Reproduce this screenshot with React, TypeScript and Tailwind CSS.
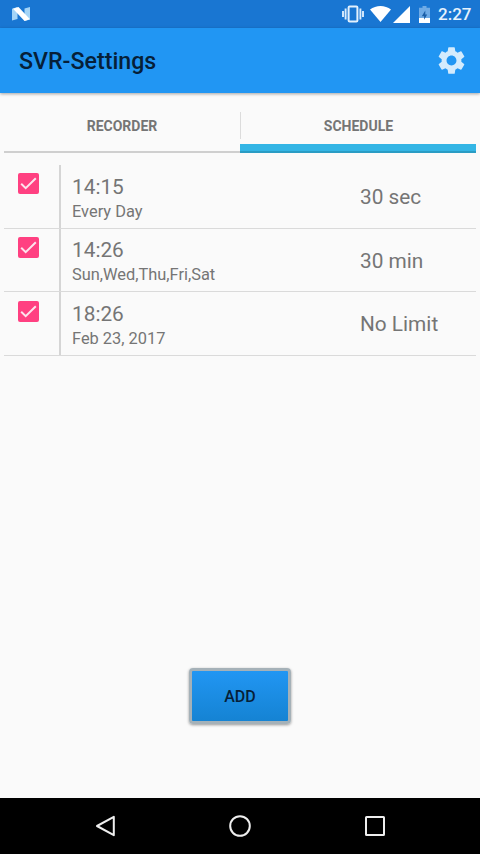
import { MdSettings } from 'react-icons/md';

interface ScheduleItem {
  time: string;
  days: string;
  duration: string;
}

const SCHEDULE_ITEMS: ScheduleItem[] = [
  { time: '14:15', days: 'Every Day', duration: '30 sec' },
  { time: '14:26', days: 'Sun,Wed,Thu,Fri,Sat', duration: '30 min' },
  { time: '18:26', days: 'Feb 23, 2017', duration: 'No Limit' },
];

function StatusBar() {
  return (
    <div className="flex h-7 items-center bg-[#1976d2] pr-[10px] pl-3 text-white">
      <svg className="h-[14px] w-[18px]" viewBox="0 0 18 14">
        <path d="M0 1.8 5.5 0v12L0 13.5z" fill="#a3d4f7" />
        <path d="M12.5 1.5 18 0v12.5L12.5 14z" fill="#a3d4f7" />
        <path d="M1 1.8 6.5 0 18 12.3 12.5 14z" fill="#fff" />
      </svg>
      <svg className="ml-auto h-[18px] w-[22px]" viewBox="0 0 22 18">
        <path
          d="M1 6v6M3.6 3.5v11M18.4 3.5v11M21 6v6"
          stroke="#d9ecfd"
          strokeWidth="1.9"
        />
        <rect
          x="6.6"
          y="1.6"
          width="8.8"
          height="14.8"
          rx="1"
          fill="none"
          stroke="#e3f1fd"
          strokeWidth="2"
        />
      </svg>
      <svg className="ml-[6px] h-4 w-[21px]" viewBox="0 0 21 16">
        <path d="M0 3.6C6-1.2 15-1.2 21 3.6L10.5 16z" fill="#fff" />
      </svg>
      <svg className="ml-[2px] h-[17px] w-[17px]" viewBox="0 0 17 17">
        <path d="M17 0v17H0z" fill="#fff" />
      </svg>
      <svg className="ml-[9px] h-[17px] w-[11px]" viewBox="0 0 11 17">
        <path d="M3.5 0h4v1.7H11V12H0V1.7h3.5z" fill="#6fabe6" />
        <path d="M0 12h11v5H0z" fill="#fff" />
        <path d="M6.3 4.5 2.8 10.2h2.3v3.6l3.1-5.4H6.3z" fill="#1c5fa8" />
      </svg>
      <span className="ml-2 w-8 text-[17px] leading-7 font-medium whitespace-nowrap text-[#e6f2fd]">
        2:27
      </span>
    </div>
  );
}

function Toolbar() {
  return (
    <header className="relative flex h-[65px] items-center justify-between bg-[#2196f3] pr-[12px] pl-[19px] shadow-[0_1px_3px_rgba(0,0,0,0.35)]">
      <h1 className="pt-[2px] text-[23.2px] font-medium text-[#061f38]">
        SVR-Settings
      </h1>
      <MdSettings className="h-[33px] w-[33px] text-[#d3ebfd]" />
    </header>
  );
}

function Tabs() {
  return (
    <div className="mx-1 mt-[5px] flex h-[55px] font-bold text-[#757575]">
      <button className="flex flex-1 items-center justify-center border-b-2 border-[#cfcfcf] pt-[3px] text-sm">
        RECORDER
      </button>
      <button className="flex flex-1 flex-col">
        <span className="mt-[14px] flex h-[27px] items-center justify-center border-l border-[#dcdcdc] pt-px text-sm">
          SCHEDULE
        </span>
        <span className="mt-[5px] h-[9px] border-b-2 border-[#2a9cc4] bg-[#33b5e5]" />
      </button>
    </div>
  );
}

function Checkbox() {
  return (
    <svg className="mt-[8.4px] ml-[14px] h-[21px] w-[21px]" viewBox="0 0 21 21">
      <rect width="21" height="21" rx="2" fill="#ff4081" />
      <path
        d="m3.2 10.7 4.5 4.5L17.8 5.3"
        fill="none"
        stroke="#fde3ec"
        strokeWidth="2"
      />
    </svg>
  );
}

function ScheduleRow({ time, days, duration }: ScheduleItem) {
  return (
    <li className="flex h-[63.7px] border-b border-[#dadada] text-[#757575]">
      <div className="w-[57px] shrink-0 border-r-2 border-[#d5d5d5]">
        <Checkbox />
      </div>
      <div className="flex w-[288px] flex-col pt-[8.6px] pl-[11px]">
        <span className="text-[20.8px] leading-[26px]">{time}</span>
        <span className="text-[16.4px] leading-6">{days}</span>
      </div>
      <span className="pl-[11px] text-[20.8px] leading-[65px] whitespace-nowrap">
        {duration}
      </span>
    </li>
  );
}

function NavigationBar() {
  return (
    <nav className="flex h-14 items-center justify-between bg-black px-[93px]">
      <svg className="h-6 w-6" viewBox="0 0 24 24">
        <path
          d="M20.8 2.8v18.4L4 12z"
          fill="none"
          stroke="#eee"
          strokeWidth="2"
          strokeLinejoin="round"
        />
      </svg>
      <svg className="h-6 w-6" viewBox="0 0 24 24">
        <circle cx="12" cy="12" r="9.8" fill="none" stroke="#eee" strokeWidth="2" />
      </svg>
      <svg className="h-6 w-6" viewBox="0 0 24 24">
        <rect
          x="3"
          y="3"
          width="18"
          height="18"
          rx=".5"
          fill="none"
          stroke="#eee"
          strokeWidth="2"
        />
      </svg>
    </nav>
  );
}

export default function App() {
  return (
    <div className="flex h-[854px] w-[480px] flex-col overflow-hidden bg-[#fafafa] font-['Roboto',sans-serif]">
      <StatusBar />
      <Toolbar />
      <Tabs />
      <ul className="mx-1 mt-3">
        {SCHEDULE_ITEMS.map((item) => (
          <ScheduleRow key={item.time} {...item} />
        ))}
      </ul>
      <div className="mt-auto mb-[74px] flex justify-center">
        <button className="h-[56px] w-[102px] rounded-[4px] border-[3px] border-[#a5b1b8] bg-linear-to-b from-[#2196f3] to-[#1583d3] pt-[2px] text-[16px] font-medium text-[#061f38] shadow-[0_1px_3px_rgba(0,0,0,0.4)]">
          ADD
        </button>
      </div>
      <NavigationBar />
    </div>
  );
}
